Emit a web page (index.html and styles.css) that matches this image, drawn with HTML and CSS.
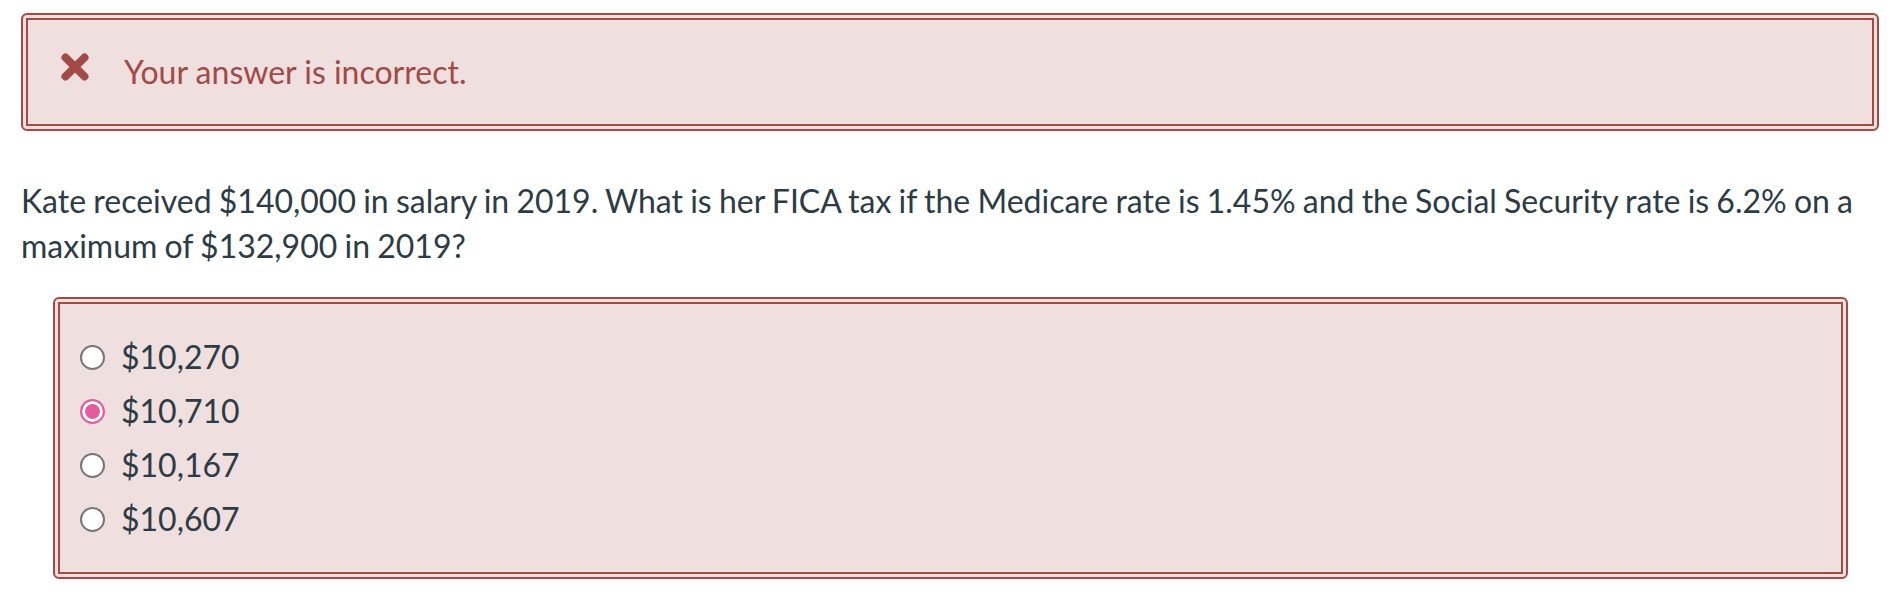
FILE: index.html
```html
<!DOCTYPE html>
<html lang="en">
<head>
    <meta charset="UTF-8">
    <meta name="viewport" content="width=device-width, initial-scale=1.0">
    <title>Quiz Question</title>
    <link rel="stylesheet" href="styles.css">
</head>
<body>

<div class="question">
    <!-- Result banner -->
    <div class="frame">
        <div class="frame-inner alert">
            <svg class="alert-icon" viewBox="0 0 28 28" aria-hidden="true">
                <path d="M4.5 4.5 L23.5 23.5 M23.5 4.5 L4.5 23.5" />
            </svg>
            <span>Your answer is incorrect.</span>
        </div>
    </div>

    <p class="question-text">Kate received $140,000 in salary in 2019. What is her FICA tax if the Medicare rate is 1.45% and the Social Security rate is 6.2% on a maximum of $132,900 in 2019?</p>

    <!-- Answer choices -->
    <div class="frame answers-frame">
        <div class="frame-inner answers">
            <label class="answer"><input type="radio" name="fica" disabled> $10,270</label>
            <label class="answer"><input type="radio" name="fica" checked disabled> $10,710</label>
            <label class="answer"><input type="radio" name="fica" disabled> $10,167</label>
            <label class="answer"><input type="radio" name="fica" disabled> $10,607</label>
        </div>
    </div>
</div>

</body>
</html>
```

FILE: styles.css
```css
/* base */
body {
    font-family: Lato, "Open Sans", Arial, sans-serif;
    font-size: 32px;
    color: #2d3b45;
    background: #fff;
    margin: 0;
    padding: 13px 17px 0 21px;
}

/* double red frame */
.frame {
    border: 2px solid #a14a46;
    border-radius: 6px;
    padding: 3px;
    background: #efdfdf;
}
.frame-inner {
    border: 2px solid #a14a46;
}

/* incorrect banner */
.alert {
    display: flex;
    align-items: center;
    height: 104px;
    padding-left: 33px;
    color: #a14a46;
    line-height: 1.2;
}
.alert-icon {
    width: 28px;
    height: 28px;
    margin-right: 35px;
    margin-top: -11px;
    flex-shrink: 0;
}
.alert-icon path {
    stroke: #a14a46;
    stroke-width: 8;
    stroke-linecap: round;
    fill: none;
}

/* question */
.question-text {
    margin: 47px 0 29px;
    line-height: 45px;
    word-spacing: -1px;
}

/* answers */
.answers-frame {
    margin: 0 31px 0 32px;
}
.answers {
    padding: 26px 20px;
}
.answer {
    display: flex;
    align-items: center;
    height: 54px;
    line-height: 54px;
}
.answer input {
    appearance: none;
    -webkit-appearance: none;
    width: 25px;
    height: 25px;
    margin: 0 16px 0 0;
    border: 2px solid #767676;
    border-radius: 50%;
    background: #fff;
    box-sizing: border-box;
    opacity: 1;
}
.answer input:checked {
    border-color: #e45c9e;
    background: #e45c9e;
    box-shadow: inset 0 0 0 3px #fff;
}
```
